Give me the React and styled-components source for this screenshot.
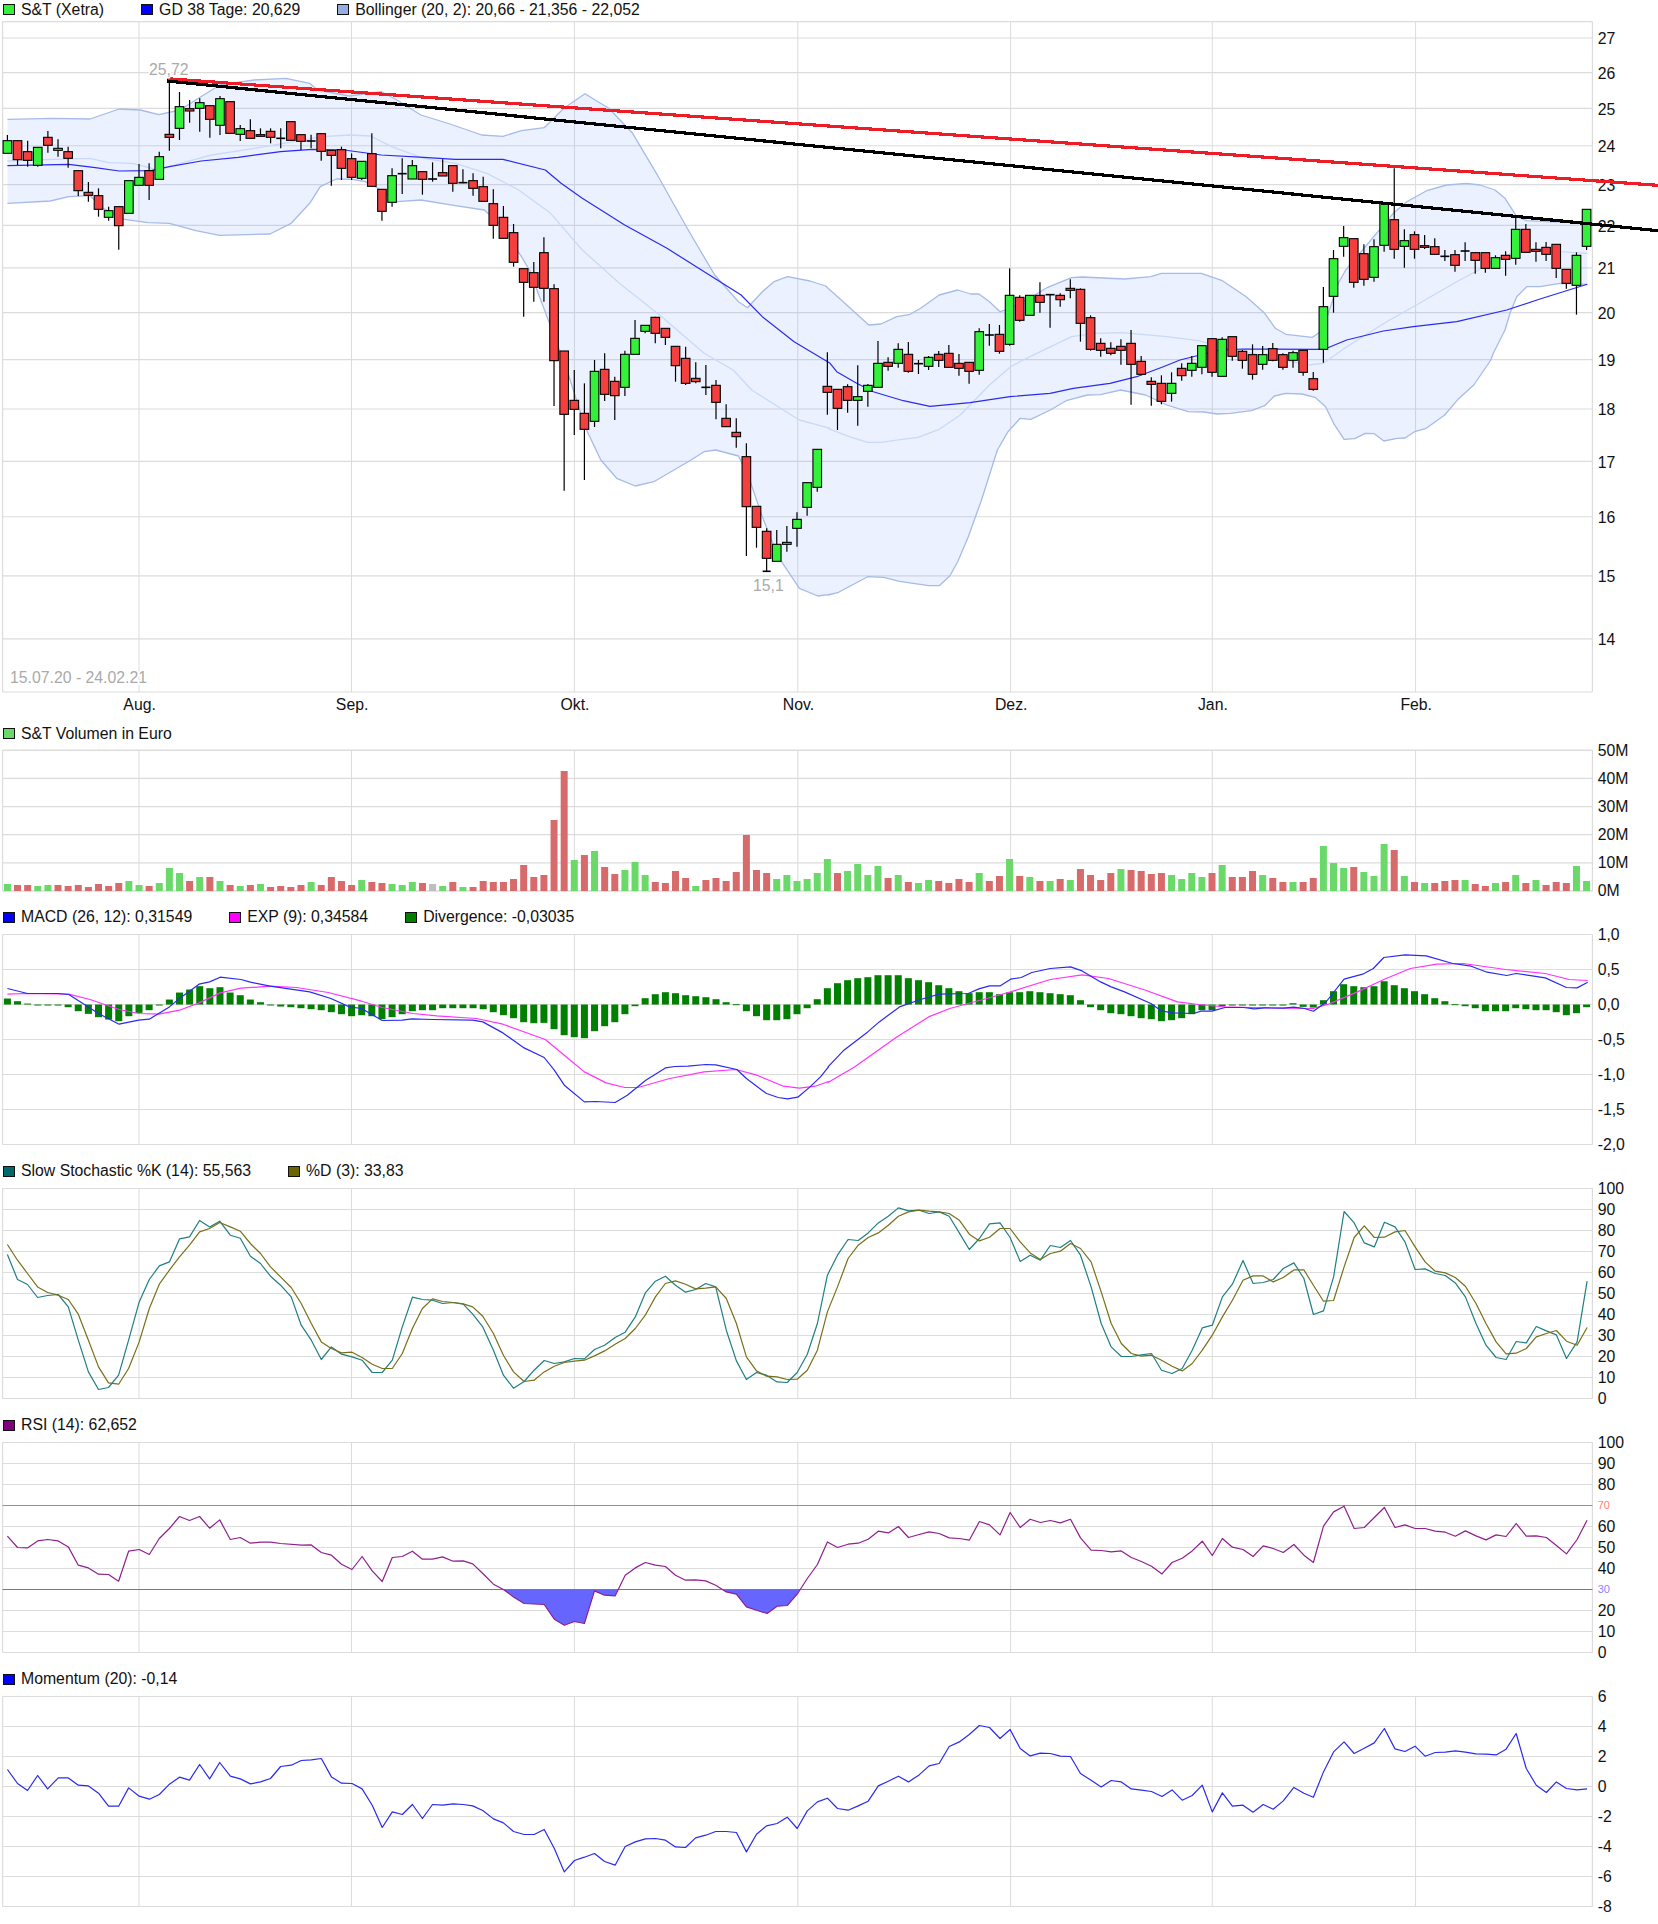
import React from 'react';
import styled, { createGlobalStyle } from 'styled-components';

const GlobalStyle = createGlobalStyle`
	html, body { margin: 0; padding: 0; background: #fff; }
	body { font-family: "Liberation Sans", Arial, sans-serif; overflow: hidden; }
`;

const Page = styled.div`
	width: 1658px;
	height: 1924px;
	display: flex;
	flex-direction: column;
	color: #111;
`;

const Legend = styled.div`
	display: flex;
	align-items: center;
	gap: 37px;
	height: ${p => p.$height}px;
	padding-left: 3px;
	font-size: 15.8px;
`;

const LegendItem = styled.div`
	display: flex;
	align-items: center;
	gap: 6px;
	white-space: nowrap;
`;

const Swatch = styled.span`
	display: block;
	box-sizing: border-box;
	width: 12px;
	height: 11.5px;
	border: 1px solid #111;
	background: ${p => p.$color};
`;

const ChartSvg = styled.svg`
	display: block;
	width: 1658px;
	height: ${p => p.$height}px;
	flex: none;
`;

const GridLine = styled.line`
	stroke: #dcdcdc;
	stroke-width: ${p => p.$w || 1.2};
`;

const Tick = styled.text`
	font-family: "Liberation Sans", Arial, sans-serif;
	font-size: ${p => p.$size || 15.8}px;
	fill: ${p => p.$color || '#111'};
	dominant-baseline: central;
	text-anchor: ${p => p.$anchor || 'start'};
`;

const Note = styled.text`
	font-family: "Liberation Sans", Arial, sans-serif;
	font-size: 15.8px;
	fill: #aaa;
	dominant-baseline: central;
	stroke: #fff;
	stroke-width: 3px;
	paint-order: stroke;
`;

const Series = styled.polyline`
	fill: none;
	stroke: ${p => p.$color};
	stroke-width: ${p => p.$w || 1.2};
	stroke-linejoin: round;
`;

const Band = styled.polygon`
	fill: #5a8cf5;
	fill-opacity: 0.12;
`;

const Trend = styled.line`
	stroke: ${p => p.$color};
	stroke-width: 3.2;
	shape-rendering: crispEdges;
`;

const Bar = styled.rect`
	fill: ${p => p.$color};
`;

const Wick = styled.line`
	stroke: #000;
	stroke-width: 1.2;
`;

const Body = styled.rect`
	fill: ${p => (p.$kind === 'g' ? '#35f03a' : '#f43f3f')};
	stroke: #000;
	stroke-width: 1.1;
`;

const Doji = styled.line`
	stroke: #000;
	stroke-width: 1.6;
`;

const FRAME_L = 2.6;
const FRAME_R = 1592.4;
const MONTHS = [[139, 'Aug.'], [351.5, 'Sep.'], [574.4, 'Okt.'], [797.8, 'Nov.'], [1010.6, 'Dez.'], [1212.3, 'Jan.'], [1415.6, 'Feb.']];
const xAt = i => 7.4 + 10.123 * i;

const pairs = (arr, fx, fy) => {
	const out = [];
	for (let i = 0; i < arr.length; i += 2) out.push([fx(arr[i]), fy(arr[i + 1])]);
	return out;
};
// points read off the left / right half of the picture, y given in thirds of a pixel
const L = (base, arr) => pairs(arr, x => x / 1.889, y => base + y / 3);
const R = (base, arr) => pairs(arr, x => 828 + x / 1.889, y => base + y / 3);
const Z11 = arr => pairs(arr, x => 790 + x / 3, y => 250 + y / 3);
const Z12 = arr => pairs(arr, x => 1180 + x / 3, y => 150 + y / 3);
const str = pts => pts.map(p => `${p[0].toFixed(1)},${p[1].toFixed(1)}`).join(' ');

const upper = [
	...L(0, [14,358,100,355,170,357,225,327,265,330,300,344,340,330,375,295,415,255,480,240,540,235,585,250,600,270,660,288,720,275,750,300,795,345,850,372,910,405,950,409,985,392,1028,383,1065,325,1105,281,1150,325,1195,400,1240,520,1300,690,1350,825,1395,905,1412,923,1440,875,1462,845,1488,830,1530,843,1560,858]),
	...R(0, [0,865,25,900,77,975,100,972,130,950,155,943,175,925,210,885,245,870,270,882,285,882,305,905,325,935,345,925,385,890,415,862,460,833,480,831,560,837,610,830,630,820,705,820,745,842,790,890,825,940,845,985,865,1003,915,1012,935,990]),
	...Z12([445,490,475,400,497,360,640,190,680,155,740,122,800,105,860,100,900,105,945,120,975,145,1010,200,1040,212,1100,215,1222,219]),
];
const lower = [
	...L(0, [14,610,95,603,130,590,170,587,195,625,235,658,280,668,320,670,370,692,415,706,510,702,550,670,585,610,605,560,635,537,665,538,690,545,720,570,750,605,795,600,860,617,915,630,950,680,985,770,1000,810,1050,1020]),
	...L(360, [1075,50,1105,200,1135,300,1165,355,1200,378,1235,365,1300,305,1330,275,1352,270,1395,288,1415,355,1440,470,1470,590,1510,685,1545,708,1568,703]),
	...R(360, [0,705,20,697,75,650,105,652,135,664,190,677,210,677,230,648,245,605,265,530,290,420,320,270,340,215,363,175,383,178,420,150,450,122,490,105,515,104,553,90,600,105,640,135,680,155,710,156,735,162,760,160,800,152,825,137,843,108,865,100,895,102,920,112,940,140,955,190,975,238,995,236,1015,220,1032,221,1050,243,1075,235,1090,234,1108,215,1130,205,1165,165,1190,118,1220,75,1252,0]),
	...Z12([940,610,975,540,990,490,1010,440,1040,410,1080,410,1140,400,1222,403]),
];
const middle = [
	...L(0, [14,483,100,478,170,475,205,488,250,490,300,510,340,490,400,465,500,440,610,410,660,405,700,408,740,440,800,475,860,490,920,520,980,570,1040,640,1100,750,1170,850,1250,950,1330,1060]),
	...L(360, [1352,0,1385,30,1420,90,1470,140,1510,180,1568,205]),
	...R(360, [0,205,40,230,75,247,100,247,140,238,170,232,210,208,250,165,305,75,345,20]),
	...R(0, [375,1075,460,1010,505,1000,555,998,640,1010,700,1022]),
	...Z12([120,590,385,645,430,640,500,590,620,515,700,470,830,395,960,325,1020,300,1140,305,1222,310]),
];
const gd38 = [
	...L(0, [14,497,130,493,180,503,225,513,285,512,320,500,380,483,450,472,530,455,590,448,650,450,720,465,800,472,860,478,950,478,1030,510,1060,550,1100,595,1180,675,1260,745,1340,825,1400,885,1440,950,1500,1025,1568,1090]),
	...Z11([140,365,200,400,250,425,340,452,420,469,540,458,660,440,780,430,850,415,960,400,1040,380,1120,350]),
	...Z12([0,630,120,600,190,597,410,598,440,595,500,570,610,543,700,530,830,515,980,480,1080,447,1222,403]),
];

// body top, body bottom, wick top, wick bottom, kind (y in thirds of a pixel)
const CANDLES = [
	[422,460,405,460,'g'],[422,479,422,495,'r'],[455,481,422,500,'r'],[442,496,442,500,'g'],[412,436,393,458,'r'],[445,451,418,470,'g'],[455,475,440,503,'r'],[512,572,512,588,'r'],[577,586,546,605,'r'],[587,628,565,650,'r'],
	[632,652,620,662,'g'],[620,677,620,749,'r'],[542,640,542,640,'g'],[532,556,492,556,'g'],[512,556,490,600,'r'],[470,538,455,538,'g'],[403,412,243,452,'r'],[320,385,276,420,'g'],[326,333,300,368,'r'],[308,325,295,395,'g'],
	[317,358,317,413,'r'],[296,376,288,405,'g'],[305,400,305,400,'r'],[386,403,375,423,'g'],[392,415,358,415,'r'],[404,409,385,409,'r'],[394,412,385,430,'r'],[415,415,385,445,'k'],[365,421,365,421,'r'],[404,424,404,450,'r'],
	[423,423,404,445,'k'],[401,454,401,482,'r'],[451,466,451,557,'r'],[449,505,440,540,'r'],[476,532,460,540,'r'],[484,535,484,540,'g'],[461,559,400,559,'r'],[568,634,568,662,'r'],[527,607,505,620,'g'],[521,521,475,582,'k'],
	[497,537,480,537,'g'],[515,538,515,584,'r'],[537,537,487,545,'k'],[518,528,478,528,'r'],[497,550,497,575,'r'],[548,548,508,550,'k'],[542,565,520,587,'r'],[560,604,530,604,'r'],[611,676,568,716,'r'],[652,715,618,715,'r'],
	[698,787,672,800,'r'],[806,847,806,950,'r'],[818,862,786,905,'r'],[758,865,712,905,'r'],[866,1082,853,1218,'r'],[1053,1243,1053,1472,'r'],[1201,1228,1110,1305,'r'],[1240,1288,1150,1440,'r'],[1114,1264,1080,1281,'g'],[1108,1183,1060,1203,'r'],
	[1144,1187,1130,1260,'r'],[1063,1162,1052,1188,'g'],[1015,1063,960,1063,'g'],[976,994,976,1000,'g'],[952,1000,950,1030,'r'],[985,1012,985,1035,'r'],[1039,1097,1039,1145,'r'],[1075,1150,1040,1155,'r'],[1135,1145,1087,1150,'r'],[1162,1162,1095,1185,'k'],
	[1156,1207,1140,1258,'r'],[1255,1280,1213,1280,'r'],[1297,1310,1255,1343,'r'],[1370,1520,1330,1668,'r'],[1519,1582,1519,1643,'r'],[1594,1675,1585,1714,'r'],[1633,1684,1590,1684,'g'],[1627,1633,1578,1655,'g'],[1558,1585,1537,1640,'g'],[1448,1522,1448,1547,'g'],
	[1348,1462,1348,1475,'g'],[1159,1177,1057,1244,'r'],[1168,1225,1168,1290,'r'],[1160,1201,1153,1238,'r'],[1190,1201,1096,1277,'g'],[1156,1174,1152,1220,'g'],[1090,1162,1023,1162,'g'],[1087,1099,1072,1112,'r'],[1048,1090,1030,1103,'g'],[1063,1114,1026,1118,'r'],
	[1091,1091,1080,1122,'k'],[1072,1099,1068,1110,'g'],[1063,1081,1053,1101,'r'],[1060,1102,1035,1102,'r'],[1090,1105,1062,1127,'r'],[1087,1114,1087,1151,'r'],[995,1111,985,1124,'g'],[1005,1005,972,1037,'k'],[1003,1054,975,1061,'r'],[886,1033,805,1037,'g'],
	[892,961,886,965,'r'],[886,946,886,946,'g'],[886,907,847,938,'r'],[884,884,884,983,'k'],[886,899,880,920,'r'],[865,871,838,895,'r'],[868,970,865,1025,'r'],[953,1048,946,1052,'r'],[1030,1051,1015,1070,'r'],[1045,1060,1027,1066,'r'],
	[1039,1051,1018,1094,'r'],[1030,1093,990,1214,'r'],[1084,1123,1068,1126,'r'],[1144,1153,1132,1217,'r'],[1150,1204,1126,1213,'r'],[1150,1180,1117,1205,'g'],[1105,1127,1090,1142,'r'],[1090,1111,1068,1130,'g'],[1037,1102,1037,1123,'g'],[1016,1117,1016,1130,'r'],
	[1018,1129,1012,1129,'g'],[1010,1069,1010,1082,'r'],[1054,1081,1050,1106,'r'],[1064,1123,1033,1139,'r'],[1064,1093,1038,1109,'g'],[1046,1081,1029,1084,'r'],[1064,1102,1060,1109,'r'],[1058,1081,1052,1103,'g'],[1051,1117,1051,1127,'r'],[1136,1168,1116,1172,'r'],
	[920,1048,861,1088,'g'],[776,889,750,938,'g'],[713,739,678,770,'g'],[716,847,716,863,'r'],[761,838,733,857,'r'],[740,832,718,845,'g'],[610,736,610,755,'g'],[659,748,505,776,'r'],[722,739,688,803,'g'],[704,748,694,776,'r'],
	[737,742,705,747,'r'],[740,763,715,763,'r'],[769,769,750,783,'k'],[764,796,750,815,'r'],[753,753,727,783,'k'],[758,781,758,821,'r'],[758,805,758,818,'r'],[773,805,766,805,'g'],[766,778,754,827,'r'],[688,775,645,794,'g'],
	[688,757,672,757,'r'],[748,754,727,785,'r'],[742,763,726,783,'r'],[733,805,733,834,'r'],[808,850,808,866,'r'],[766,856,757,944,'g'],[628,739,628,750,'g'],
];

const VOL = 'g492 r495 r495 g498 g495 r495 r498 r495 r501 r492 r498 r489 g483 g495 r498 g489 g444 g459 r483 g471 r471 g483 r495 g498 r495 g492 r501 r498 r501 r495 g486 r495 r471 r483 r495 g480 r486 r489 g492 g495 g486 r489 x492 g498 r486 g501 r501 r483 r486 r486 r477 r435 r471 r465 r300 r153 g420 r405 g393 r441 r462 g450 g426 g465 r486 r489 r453 r474 g498 r480 r474 r483 r456 r345 r450 r459 g477 g465 g483 g477 g459 g417 r459 g453 g432 g465 g438 r474 g465 r486 g489 g480 r483 r489 r477 r486 g459 r483 r468 g417 r468 g471 r483 g483 r477 g480 r447 r465 r480 r459 g447 r450 r453 r462 r459 g465 g477 g459 g471 r459 g435 r471 r471 r453 g465 r474 r486 g486 r486 r474 g378 g429 g444 r441 g456 g468 g372 r390 g468 r486 g489 r489 r483 r480 g480 r492 r498 g489 r486 g465 r489 g480 r495 r486 r489 g438 g483'.split(' ');
const VOL_COLORS = { g: '#6ad96a', r: '#d76a6a', x: '#bdbdbd' };

const DIVERGENCE = [835,843,850,853,853,853,861,873,881,891,898,903,888,878,870,853,838,817,808,798,804,801,817,825,838,846,853,859,861,864,867,870,876,882,888,885,888,897,891,882,873,870,870,864,864,864,864,867,876,885,894,906,909,908,927,945,951,954,933,918,906,882,858,834,822,816,819,825,828,831,837,846,852,873,888,900,900,897,882,864,837,804,789,780,774,771,765,765,765,774,780,786,795,804,813,819,816,816,822,816,816,813,816,819,822,825,840,861,870,879,882,888,894,897,903,900,894,882,870,870,858,856,855,855,853,853,853,849,860,862,840,813,792,798,801,798,783,795,804,813,822,834,843,852,858,864,873,873,873,864,867,870,870,876,885,879,861];

const macdLine = [
	...L(720, [14,805,52,820,110,820,130,823,186,880,225,912,262,900,282,897,320,860,339,835,376,792,396,785,416,771,455,778,473,786,510,798,585,815,625,835,660,860,683,865,722,901,760,900,778,896,817,898,893,900,912,905,950,938,990,983,1028,1012,1047,1050,1066,1095,1104,1145,1125,1144,1162,1147,1185,1125,1220,1080,1257,1043,1275,1039,1300,1038,1333,1033,1352,1034,1392,1048,1410,1075,1448,1120,1470,1132,1488,1136,1507,1131,1530,1100,1550,1070,1565,1040]),
	...R(720, [0,1040,30,990,75,935,97,905,135,860,175,838,210,822,265,820,285,806,305,797,325,797,345,777,365,772,385,757,420,745,458,740,480,752,515,785,535,800,560,815,610,850,630,872,650,878,690,880,705,873,725,873,750,862,785,862,805,866,825,863,860,864,880,861,900,865,917,873,940,847,975,777,1010,762,1030,745,1050,712,1090,704,1130,707,1180,730,1215,738,1245,756,1282,766,1300,760,1355,773,1395,802,1415,803,1435,786]),
];
const expLine = [
	...L(720, [14,822,52,820,130,822,170,838,225,868,262,880,300,882,339,870,376,848,416,818,455,804,510,798,560,802,620,817,683,843,722,862,780,880,825,887,900,895,950,912,1030,958,1066,1005,1104,1055,1145,1088,1180,1102,1205,1102,1265,1075,1330,1055,1390,1048,1430,1065,1480,1098,1510,1104,1540,1098,1565,1084]),
	...R(720, [0,1087,50,1040,130,950,190,890,230,865,300,835,345,815,420,778,480,764,530,775,600,810,660,845,700,853,750,860,800,862,860,864,917,865,945,852,1000,815,1050,778,1100,745,1150,732,1200,730,1280,748,1355,760,1400,778,1435,781]),
];
const stochK = [
	...L(1160, [14,283,33,358,52,373,71,412,90,406,110,403,129,440,148,540,167,635,186,688,205,682,224,645,243,540,263,425,282,358,301,317,320,305,339,236,358,230,377,181,396,200,415,183,435,225,454,234,473,288,492,310,511,348,530,375,550,410,569,495,588,540,607,598,626,560,645,582,665,590,684,600,703,637,722,637,741,600,760,500,779,411,798,418,817,420,836,430,856,427,875,432,893,462,912,500,932,570,951,645,970,684,990,664,1009,630,1028,601,1047,610,1066,605,1085,595,1104,596,1123,568,1142,555,1162,532,1181,516,1200,470,1219,398,1238,363,1257,348,1276,375,1295,396,1314,388,1333,370,1352,380,1372,510,1391,602,1410,658,1429,637,1448,645,1468,665,1487,667,1506,637,1525,582,1544,490,1563,345]),
	...R(1160, [18,285,38,238,57,241,76,218,95,188,114,168,133,143,152,152,172,150,191,160,210,155,229,168,248,218,267,268,286,235,305,191,325,188,344,232,363,304,382,285,401,300,420,256,439,262,458,241,477,285,497,380,516,490,535,560,554,589,573,589,592,584,611,580,630,630,650,640,669,625,688,570,707,503,726,495,745,410,764,372,784,301,803,370,822,367,841,358,860,325,880,308,899,355,917,463,936,452,955,350,975,154,994,188,1013,248,1032,260,1051,186,1071,200,1090,245,1109,328,1128,326,1147,340,1166,346,1185,368,1204,410,1224,490,1243,555,1262,592,1281,598,1300,544,1319,548,1338,499,1357,512,1376,524,1395,595,1415,545,1434,363]),
];
const stochD = [
	...L(1160, [14,253,33,300,52,340,71,380,90,397,110,405,129,418,148,462,167,540,186,620,205,668,224,672,243,625,263,545,282,445,301,372,320,330,339,290,358,255,377,215,396,205,415,187,435,200,454,213,473,250,492,280,511,320,530,350,550,382,569,430,588,490,607,545,626,565,645,578,665,576,684,592,703,612,722,625,741,625,760,580,779,505,798,445,817,416,836,424,856,427,875,431,893,440,912,468,932,520,951,585,970,635,990,664,1009,660,1028,635,1047,618,1066,607,1085,603,1104,600,1123,587,1142,572,1162,552,1181,535,1200,505,1219,465,1238,410,1257,370,1276,362,1295,372,1314,386,1333,384,1352,380,1372,415,1391,490,1410,590,1429,632,1448,648,1468,650,1487,658,1506,657,1525,630,1544,570,1563,455]),
	...R(1160, [18,380,38,295,57,255,76,232,95,218,114,195,133,168,152,155,172,150,191,153,210,155,229,160,248,180,267,222,286,242,305,231,325,205,344,205,363,245,382,278,401,298,420,280,439,273,458,250,477,265,497,305,516,395,535,490,554,550,573,580,592,588,611,585,630,600,650,618,669,632,688,610,707,570,726,525,745,470,764,420,784,360,803,347,822,347,841,365,860,352,880,329,899,329,917,375,936,423,955,421,975,320,994,232,1013,197,1032,232,1051,231,1071,215,1090,211,1109,260,1128,305,1147,333,1166,338,1185,352,1204,378,1224,430,1243,490,1262,545,1281,581,1300,579,1319,565,1338,530,1357,520,1376,511,1395,543,1415,555,1434,502]),
];
const rsiLine = [
	...L(1160, [14,1128,33,1162,52,1163,71,1142,90,1138,110,1142,129,1160,148,1215,167,1223,186,1242,205,1243,224,1263,243,1173,263,1168,282,1183,301,1135,320,1105,339,1069,358,1081,377,1069,396,1104,415,1079,435,1138,454,1132,473,1149,492,1146,511,1146,530,1150,570,1155,588,1154,607,1177,626,1185,645,1212,665,1228,684,1189,703,1232,722,1264,741,1192,760,1189,779,1173,798,1197,817,1197,836,1190,856,1203,875,1202,893,1211,912,1240,932,1272,951,1288,970,1310,990,1330,1028,1333,1047,1377,1066,1395,1085,1384,1104,1390,1123,1292,1142,1305,1162,1307,1181,1245,1200,1223,1219,1207,1238,1215,1257,1219,1276,1245,1295,1260,1314,1259,1333,1262,1352,1275,1372,1295,1391,1302,1410,1340,1429,1350,1449,1360,1468,1338,1487,1336,1506,1302,1525,1255,1544,1213,1563,1145]),
	...R(1160, [18,1162,38,1152,57,1149,76,1137,95,1113,114,1118,133,1099,152,1132,172,1123,191,1115,210,1120,229,1133,248,1135,267,1140,286,1084,305,1094,325,1124,344,1057,363,1102,382,1077,401,1087,420,1081,439,1088,458,1077,477,1133,497,1170,516,1171,535,1175,554,1172,573,1192,592,1204,611,1218,631,1241,650,1207,669,1194,688,1172,707,1143,726,1186,745,1135,764,1161,784,1168,803,1189,822,1157,841,1165,860,1177,880,1153,899,1185,917,1207,936,1098,955,1055,975,1038,994,1105,1013,1102,1032,1072,1051,1042,1071,1102,1090,1094,1109,1105,1128,1105,1147,1113,1166,1116,1185,1128,1204,1112,1224,1127,1243,1139,1262,1124,1281,1129,1300,1090,1319,1128,1338,1127,1357,1132,1376,1156,1395,1181,1415,1138,1434,1080]),
];
const momentumLine = [
	...L(1550, [14,658,33,700,52,721,71,676,90,716,110,683,129,683,148,705,167,707,186,729,205,768,224,768,243,713,263,738,282,747,301,733,320,702,339,681,358,690,377,643,396,686,415,637,435,678,454,686,473,701,492,695,511,685,530,649,550,645,569,631,588,629,607,625,626,680,645,699,665,700,684,716,703,765,722,832,741,785,760,793,779,763,798,805,817,763,836,765,856,761,875,763,893,767,912,781,932,806,951,818,970,844,990,853,1009,853,1028,838,1047,895,1066,965,1085,931,1104,921,1123,910,1142,934,1162,945,1181,889,1200,875,1219,866,1238,865,1257,870,1276,890,1295,892,1314,863,1333,855,1352,844,1372,844,1391,847,1410,905,1429,852,1448,827,1468,820,1487,801,1506,835,1525,782,1544,755,1563,744]),
	...R(1550, [18,775,38,780,57,767,76,753,95,707,114,693,133,678,152,695,172,674,191,647,210,640,229,589,248,575,267,553,286,526,305,532,325,565,344,538,363,595,382,617,401,609,420,610,439,618,458,619,477,670,497,690,516,710,535,691,554,695,573,716,592,720,611,724,631,739,650,719,669,750,688,736,707,705,726,785,745,728,764,768,784,765,803,786,822,763,841,777,860,752,880,712,899,729,917,741,936,665,955,605,975,575,994,610,1013,594,1032,578,1051,535,1071,596,1090,604,1109,588,1128,618,1147,607,1166,606,1185,602,1204,606,1224,611,1243,612,1262,614,1281,597,1300,550,1319,655,1338,705,1357,727,1376,695,1395,715,1415,719,1434,716]),
];

const logY = p => 38 + 915 * Math.log(27 / p);

// grid, frame and the right-hand scale of one plot
function Plot({ top, bottom, ticks, labelDy = 0 }) {
	return (
		<g>
			{ticks.map(([y, label]) => (
				<g key={label}>
					<GridLine x1={FRAME_L} x2={FRAME_R} y1={y} y2={y} />
					<Tick x={1597.7} y={y + labelDy}>{label}</Tick>
				</g>
			))}
			{MONTHS.map(([x, name]) => (
				<GridLine key={name} $w={1} x1={x} x2={x} y1={top} y2={bottom} />
			))}
			<GridLine x1={FRAME_L} x2={FRAME_R} y1={top} y2={top} />
			<GridLine x1={FRAME_L} x2={FRAME_R} y1={bottom} y2={bottom} />
			<GridLine x1={FRAME_L} x2={FRAME_L} y1={top} y2={bottom} />
			<GridLine x1={FRAME_R} x2={FRAME_R} y1={top} y2={bottom} />
		</g>
	);
}

function Panel({ legend, legendHeight = 17, top, height, children }) {
	return (
		<section>
			<Legend $height={legendHeight}>
				{legend.map(([color, text]) => (
					<LegendItem key={text}>
						<Swatch $color={color} />
						{text}
					</LegendItem>
				))}
			</Legend>
			<ChartSvg $height={height} viewBox={`0 ${top} 1658 ${height}`}>{children}</ChartSvg>
		</section>
	);
}

function Candle({ c, i }) {
	const [t, b, wt, wb, kind] = c;
	const x = xAt(i);
	return (
		<g>
			<Wick x1={x} x2={x} y1={wt / 3} y2={wb / 3} />
			{kind === 'k'
				? <Doji x1={x - 4.5} x2={x + 4.5} y1={t / 3} y2={t / 3} />
				: <Body $kind={kind} x={x - 4.3} width={8.6} y={t / 3} height={(b - t) / 3} />}
		</g>
	);
}

const scale = (top, step, labels) => labels.map((l, i) => [top + i * step, l]);
const RSI_30 = 1589.3;

export default function App() {
	return (
		<Page>
			<GlobalStyle />
			<Panel
				legendHeight={19}
				top={19}
				height={706}
				legend={[['#35f03a', 'S&T (Xetra)'], ['#0000ff', 'GD 38 Tage: 20,629'], ['#94aee0', 'Bollinger (20, 2): 20,66 - 21,356 - 22,052']]}
			>
				<Plot top={21.7} bottom={692} labelDy={0.7} ticks={[27, 26, 25, 24, 23, 22, 21, 20, 19, 18, 17, 16, 15, 14].map(p => [logY(p), String(p)])} />
				{MONTHS.map(([x, name]) => <Tick key={name} $anchor="middle" x={x + 0.6} y={704.5}>{name}</Tick>)}
				<Band points={str([...upper, ...[...lower].reverse()])} />
				<Series $color="#a6bbe8" $w={1.3} points={str(upper)} />
				<Series $color="#a6bbe8" $w={1.3} points={str(lower)} />
				<Series $color="#c8daf8" $w={1.3} points={str(middle)} />
				<Series $color="#2a2af0" $w={1.2} points={str(gd38)} />
				{CANDLES.map((c, i) => <Candle key={i} c={c} i={i} />)}
				<Doji x1={xAt(75) - 4} x2={xAt(75) + 4} y1={571.3} y2={571.3} />
				<Trend $color="#ee1c25" x1={166.8} y1={78.7} x2={1658} y2={185.3} />
				<Trend $color="#000" x1={166.8} y1={81} x2={1658} y2={230.7} />
				<Note x={149} y={69}>25,72</Note>
				<Note x={753} y={585.7}>15,1</Note>
				<Note x={10} y={677}>15.07.20 - 24.02.21</Note>
			</Panel>
			<Panel
				top={742}
				height={166.8}
				legend={[['#6ad96a', 'S&T Volumen in Euro']]}
			>
				<Plot top={750.3} bottom={891} ticks={scale(750.3, 28.14, ['50M', '40M', '30M', '20M', '10M', '0M'])} />
				{VOL.map((v, i) => (
					<Bar key={i} $color={VOL_COLORS[v[0]]} x={xAt(i) - 3.5} width={7} y={720 + Number(v.slice(1)) / 3} height={891 - 720 - Number(v.slice(1)) / 3} />
				))}
			</Panel>
			<Panel
				top={925.8}
				height={237}
				legend={[['#0000ff', 'MACD (26, 12): 0,31549'], ['#ff00ff', 'EXP (9): 0,34584'], ['#007f00', 'Divergence: -0,03035']]}
			>
				<Plot top={934.3} bottom={1144.3} ticks={scale(934.3, 35, ['1,0', '0,5', '0,0', '-0,5', '-1,0', '-1,5', '-2,0'])} />
				{DIVERGENCE.map((d, i) => {
					const h = Math.max(Math.abs(853 - d) / 3, 1);
					const y = d < 853 ? 720 + d / 3 : 720 + 853 / 3;
					return <Bar key={i} $color="#007f00" x={xAt(i) - 3.5} width={7} y={y} height={h} />;
				})}
				<Series $color="#ff33ff" points={str(expLine)} />
				<Series $color="#2a2af0" points={str(macdLine)} />
			</Panel>
			<Panel
				top={1179.8}
				height={237}
				legend={[['#006a6a', 'Slow Stochastic %K (14): 55,563'], ['#6b6500', '%D (3): 33,83']]}
			>
				<Plot top={1188.3} bottom={1398.3} ticks={scale(1188.3, 21, ['100', '90', '80', '70', '60', '50', '40', '30', '20', '10', '0'])} />
				<Series $color="#1f7f80" points={str(stochK)} />
				<Series $color="#77701a" points={str(stochD)} />
			</Panel>
			<Panel
				top={1433.8}
				height={237}
				legend={[['#800080', 'RSI (14): 62,652']]}
			>
				<defs>
					<clipPath id="below30"><rect x={0} y={RSI_30} width={1658} height={70} /></clipPath>
				</defs>
				<Plot top={1442.3} bottom={1652.3} ticks={['100', '90', '80', '60', '50', '40', '20', '10', '0'].map(l => [1652.3 - Number(l) * 2.1, l])} />
				<GridLine x1={FRAME_L} x2={FRAME_R} y1={1505.3} y2={1505.3} style={{ stroke: '#f06a6a' }} />
				<Tick $size={11} $color="#ff8080" x={1597.7} y={1505.3}>70</Tick>
				<polygon clipPath="url(#below30)" fill="#6666ff" points={str([[xAt(0), RSI_30], ...rsiLine, [xAt(156), RSI_30]])} />
				<GridLine x1={FRAME_L} x2={FRAME_R} y1={RSI_30} y2={RSI_30} style={{ stroke: '#6a6af0' }} />
				<Tick $size={11} $color="#8888ff" x={1597.7} y={RSI_30}>30</Tick>
				<Series $color="#8f1f8f" points={str(rsiLine)} />
			</Panel>
			<Panel
				top={1687.8}
				height={236.2}
				legend={[['#0000ff', 'Momentum (20): -0,14']]}
			>
				<Plot top={1696.3} bottom={1906.3} ticks={scale(1696.3, 30, ['6', '4', '2', '0', '-2', '-4', '-6', '-8'])} />
				<Series $color="#2a2af0" points={str(momentumLine)} />
			</Panel>
		</Page>
	);
}
